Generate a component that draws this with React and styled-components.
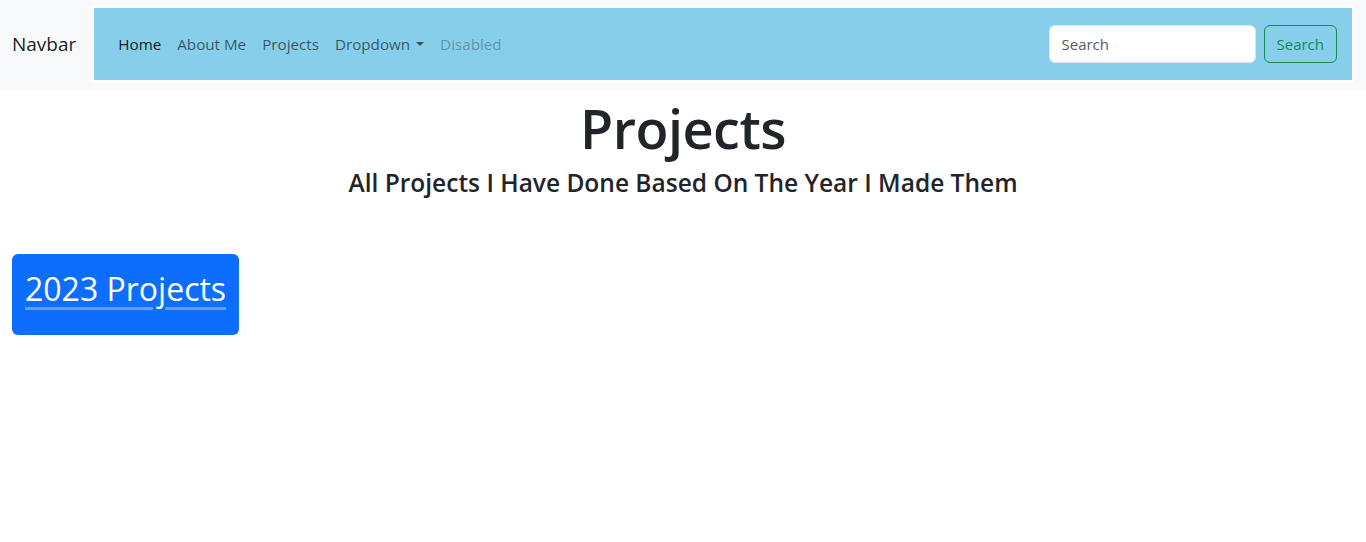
import React from "react";
import styled, { createGlobalStyle } from "styled-components";

const GlobalStyle = createGlobalStyle`
  body {
    margin: 0;
    background: #ffffff;
    font-family: "Open Sans", "Noto Sans", sans-serif;
    color: #212529;
  }
`;

const NavbarRoot = styled.nav`
  background-color: #f8f9fa;
  height: 90px;
  display: flex;
  align-items: center;
  padding: 0 12px 2px;
  box-sizing: border-box;
`;

const Brand = styled.a`
  font-size: 19px;
  color: rgba(0, 0, 0, 0.9);
  margin-right: 16px;
  text-decoration: none;
  white-space: nowrap;
`;

const Collapse = styled.div`
  flex: 1;
  height: 76px;
  box-sizing: border-box;
  background-color: #87ceeb;
  border: 2px solid #ffffff;
  display: flex;
  align-items: center;
  padding: 0 15px 0 16px;
`;

const NavList = styled.ul`
  list-style: none;
  margin: 0 auto 0 0;
  padding: 0;
  display: flex;
  align-items: center;
`;

const NavLink = styled.a`
  display: flex;
  align-items: center;
  padding: 8px;
  font-size: 15.2px;
  text-decoration: none;
  color: ${(p) =>
    p.active ? "rgba(0,0,0,0.9)" : p.disabled ? "rgba(0,0,0,0.3)" : "rgba(0,0,0,0.6)"};
`;

const Caret = styled.span`
  display: inline-block;
  margin-left: 6px;
  border-top: 4px solid rgba(0, 0, 0, 0.6);
  border-left: 4px solid transparent;
  border-right: 4px solid transparent;
`;

const SearchForm = styled.form`
  display: flex;
  align-items: center;
  gap: 8px;
`;

const SearchInput = styled.input`
  width: 207px;
  height: 38px;
  box-sizing: border-box;
  border: 1px solid #dee2e6;
  border-radius: 6px;
  padding: 0 12px;
  font-family: inherit;
  font-size: 15px;
  color: #212529;
  background: #ffffff;
  &::placeholder {
    color: #595c5f;
  }
`;

const OutlineButton = styled.button`
  height: 38px;
  box-sizing: border-box;
  padding: 0 12px;
  border: 1px solid #198754;
  border-radius: 6px;
  background: transparent;
  color: #198754;
  font-family: inherit;
  font-size: 15px;
`;

const Header = styled.header`
  text-align: center;
`;

const Title = styled.h1`
  margin: 0;
  font-size: 54px;
  font-weight: 600;
  line-height: 76px;
  letter-spacing: -0.5px;
`;

const Subtitle = styled.h4`
  margin: 2px 0 0;
  font-size: 24.5px;
  font-weight: 600;
  line-height: 30px;
`;

const Section = styled.section`
  padding: 56px 12px 0;
`;

const YearCard = styled.div`
  display: inline-flex;
  align-items: center;
  height: 81px;
  box-sizing: border-box;
  padding: 0 13px;
  background-color: #0d6efd;
  border-radius: 6px;
`;

const YearLink = styled.a`
  font-size: 32px;
  color: #ffffff;
  text-decoration: underline;
  text-decoration-color: rgba(255, 255, 255, 0.35);
  text-decoration-thickness: 3px;
  text-underline-offset: 6px;
  margin-top: -12px;
`;

export default function App() {
  return (
    <>
      <GlobalStyle />
      <NavbarRoot>
        <Brand href="#">Navbar</Brand>
        <Collapse>
          <NavList>
            <li><NavLink active href="#">Home</NavLink></li>
            <li><NavLink href="#">About Me</NavLink></li>
            <li><NavLink href="#">Projects</NavLink></li>
            <li>
              <NavLink href="#">
                Dropdown
                <Caret />
              </NavLink>
            </li>
            <li><NavLink disabled>Disabled</NavLink></li>
          </NavList>
          <SearchForm onSubmit={(e) => e.preventDefault()}>
            <SearchInput type="search" placeholder="Search" />
            <OutlineButton type="submit">Search</OutlineButton>
          </SearchForm>
        </Collapse>
      </NavbarRoot>
      <Header>
        <Title>Projects</Title>
        <Subtitle>All Projects I Have Done Based On The Year I Made Them</Subtitle>
      </Header>
      <Section>
        <YearCard>
          <YearLink href="#">2023 Projects</YearLink>
        </YearCard>
      </Section>
    </>
  );
}
